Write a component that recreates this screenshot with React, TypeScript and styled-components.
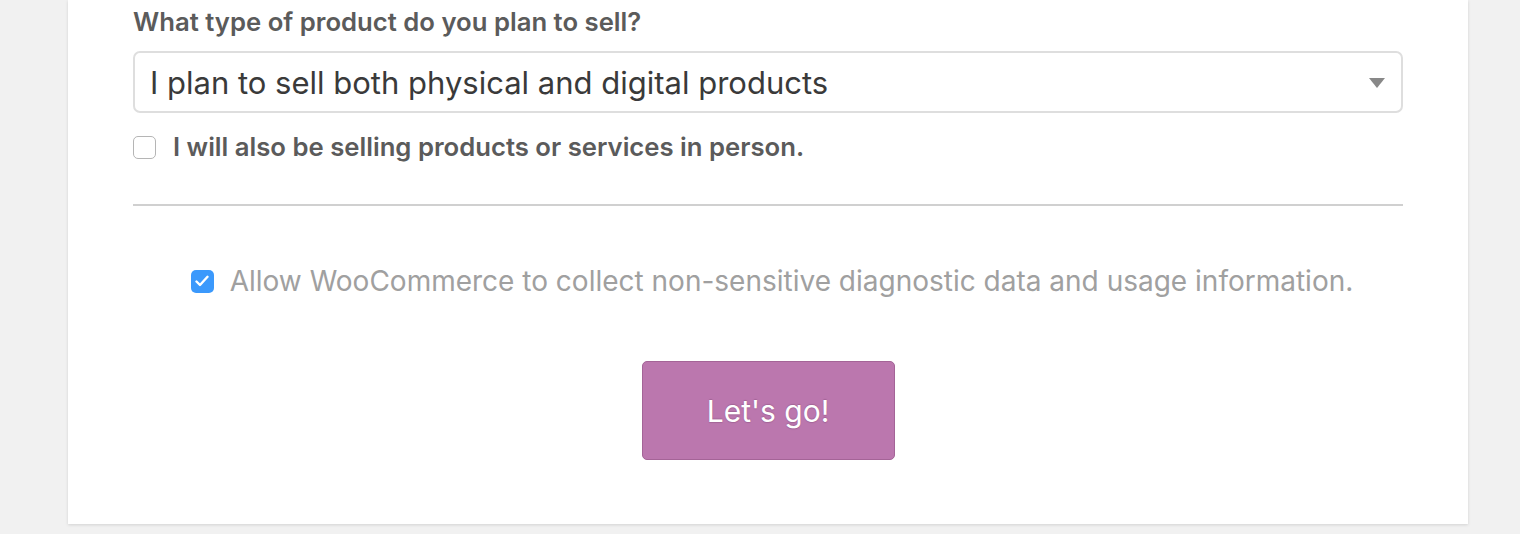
import React from "react";
import styled, { createGlobalStyle } from "styled-components";

const Global = createGlobalStyle`
  html, body { margin: 0; padding: 0; background: #f1f1f1; }
  body { font-family: Inter, "Liberation Sans", Arial, sans-serif; }
  * { box-sizing: border-box; }
`;

const Page = styled.div`
  width: 1520px;
  height: 534px;
  overflow: hidden;
  padding: 0 52px 0 68px;
`;

const Card = styled.div`
  width: 1400px;
  height: 524px;
  background: #fff;
  box-shadow: 0 1px 3px rgba(0, 0, 0, 0.13);
  padding: 7px 65px 0;
  display: flex;
  flex-direction: column;
`;

const Label = styled.label`
  display: block;
  font-size: 25.7px;
  line-height: 30px;
  font-weight: 600;
  color: #5b5b5b;
`;

const SelectBox = styled.div`
  margin-top: 14px;
  height: 62px;
  border: 2px solid #dedede;
  border-radius: 7px;
  display: flex;
  align-items: center;
  justify-content: space-between;
  padding: 2px 16px 0 15px;
  font-size: 31px;
  line-height: 40px;
  color: #3a3a3a;
`;

const Arrow = styled.span`
  width: 0;
  height: 0;
  border-left: 8px solid transparent;
  border-right: 8px solid transparent;
  border-top: 10px solid #888;
`;

const CheckRow = styled.label<{ $center?: boolean }>`
  display: flex;
  align-items: center;
  justify-content: ${(p) => (p.$center ? "center" : "flex-start")};
  gap: 17px;
`;

const Box = styled.span<{ $checked?: boolean }>`
  width: 23px;
  height: 23px;
  border-radius: 5px;
  flex: none;
  display: flex;
  align-items: center;
  justify-content: center;
  background: ${(p) => (p.$checked ? "#3b99fc" : "#fff")};
  border: ${(p) => (p.$checked ? "none" : "1.5px solid #b5b5b5")};
`;

const InPerson = styled(CheckRow)`
  margin-top: 22px;
  height: 24px;
  font-size: 25.7px;
  line-height: 24px;
  font-weight: 600;
  color: #5b5b5b;
`;

const Divider = styled.hr`
  margin: 45px 0 0;
  border: none;
  height: 2px;
  background: #d0d0d0;
`;

const AllowRow = styled(CheckRow)`
  margin-top: 63px;
  height: 24px;
  font-size: 28px;
  line-height: 24px;
  color: #a0a0a0;
  gap: 16px;
  padding-left: 8px;
`;

const ButtonRow = styled.div`
  display: flex;
  justify-content: center;
  margin-top: 68px;
`;

const Button = styled.button`
  width: 253px;
  height: 99px;
  background: #bb77ae;
  border: 1px solid #a46497;
  border-radius: 5px;
  color: #fff;
  font-family: Inter, "Liberation Sans", Arial, sans-serif;
  font-size: 30px;
  text-shadow: 0 -1px 1px #a36597, 0 1px 1px #a36597;
  cursor: pointer;
  padding: 0;
`;

export default function App() {
  return (
    <>
      <Global />
      <Page>
        <Card>
          <Label>What type of product do you plan to sell?</Label>
          <SelectBox>
            <span>I plan to sell both physical and digital products</span>
            <Arrow />
          </SelectBox>
          <InPerson>
            <Box />
            <span>I will also be selling products or services in person.</span>
          </InPerson>
          <Divider />
          <AllowRow $center>
            <Box $checked>
              <svg width="14" height="12" viewBox="0 0 14 12">
                <path d="M1.5 6.5 L5 10 L12.5 1.8" fill="none" stroke="#fff" strokeWidth="2.4" strokeLinecap="round" strokeLinejoin="round" />
              </svg>
            </Box>
            <span>Allow WooCommerce to collect non-sensitive diagnostic data and usage information.</span>
          </AllowRow>
          <ButtonRow>
            <Button>Let's go!</Button>
          </ButtonRow>
        </Card>
      </Page>
    </>
  );
}
